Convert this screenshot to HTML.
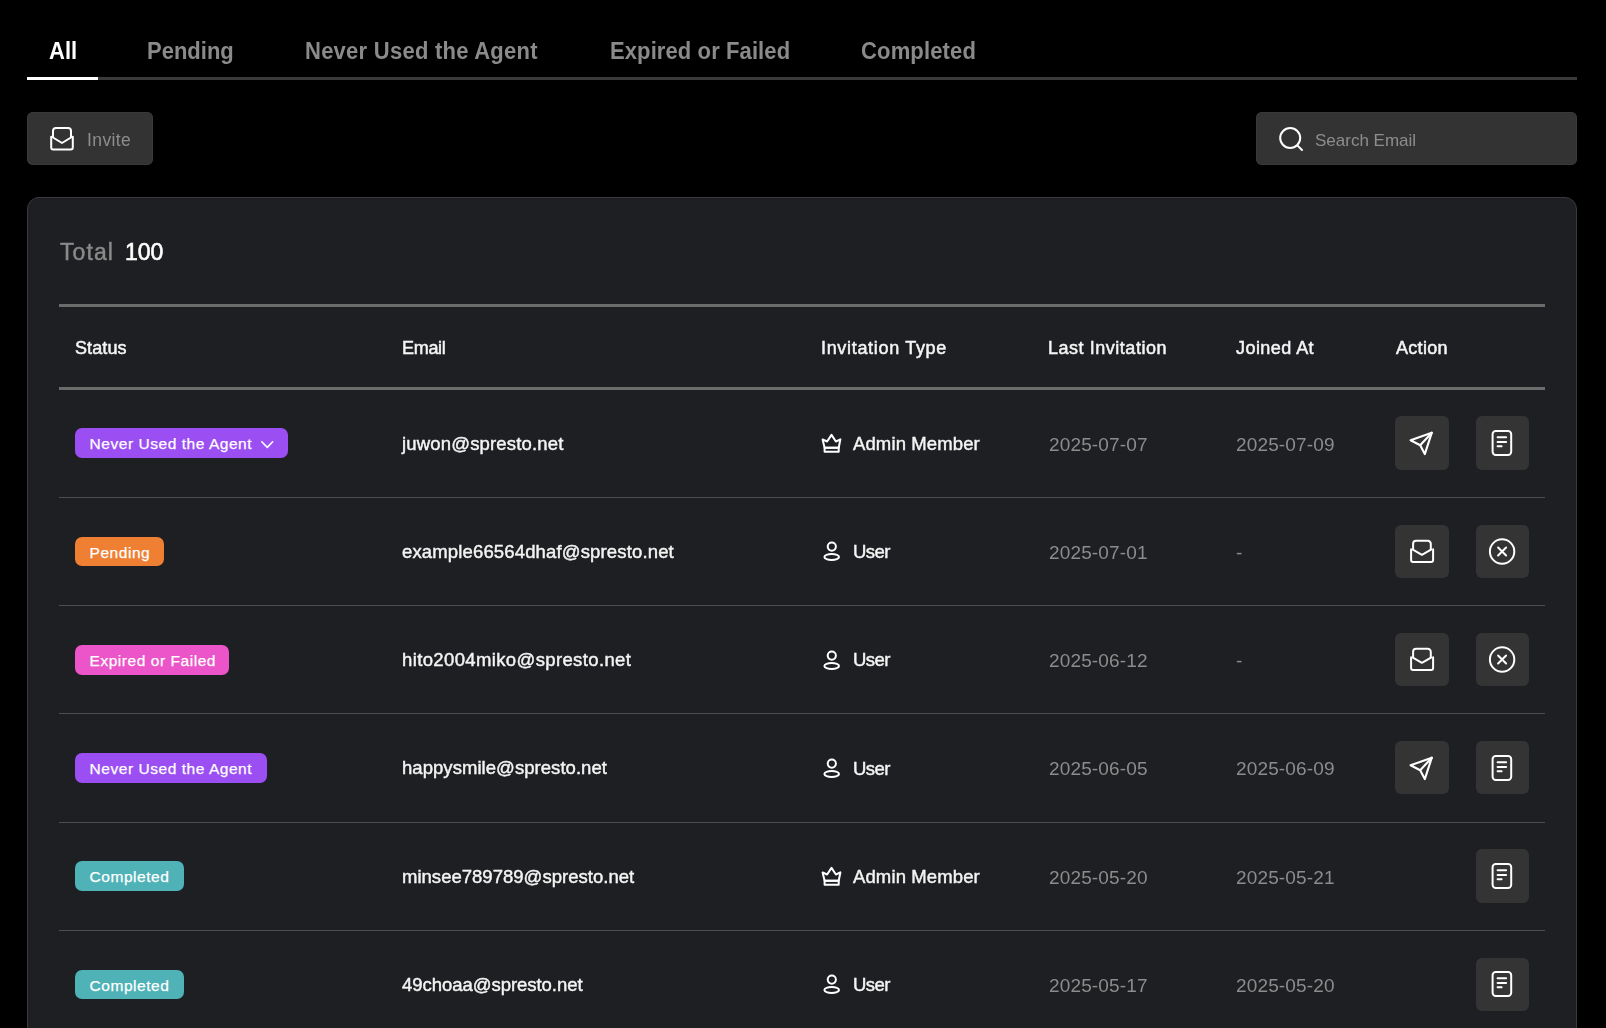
<!DOCTYPE html>
<html><head><meta charset="utf-8">
<style>
html,body{margin:0;padding:0;background:#000;width:1606px;height:1028px;overflow:hidden;font-family:"Liberation Sans",sans-serif;}
.a{position:absolute;}
.t{position:absolute;line-height:1;white-space:nowrap;will-change:transform;}
.tab{font-weight:700;color:#8a8a8a;transform:scaleY(1.07);transform-origin:0 18.7px;}
.tabline{left:27px;top:77px;width:1550px;height:3px;background:#3a3a3a;}
.btn{background:#333333;border-radius:6px;box-shadow:inset 0 0 0 1px #393939;}
.card{left:27px;top:197px;width:1548px;height:900px;background:#1e1f22;border:1px solid #38393c;border-radius:12px;}
.hline{left:59px;width:1486px;height:3px;background:#6b6b6b;}
.rline{left:59px;width:1486px;height:1px;background:#4d4d4f;}
.th{font-weight:400;color:#f5f5f5;-webkit-text-stroke:0.5px #f5f5f5;}
.badge{position:absolute;left:75px;height:29.6px;border-radius:7px;color:#fff;white-space:nowrap;}
.badge span{position:absolute;left:14.5px;line-height:1;font-size:15.5px;letter-spacing:0.55px;-webkit-text-stroke:0.25px #fff;}
.em{color:#f4f4f4;-webkit-text-stroke:0.45px #f4f4f4;}
.ty{color:#f4f4f4;-webkit-text-stroke:0.45px #f4f4f4;}
.dt{font-size:19px;color:#8c8c8c;}
.ab{position:absolute;width:53.5px;height:53.3px;background:#343434;border-radius:6px;}
.ab svg{position:absolute;left:0;top:0;}
svg{overflow:visible;}
</style></head><body>
<div class="t tab" style="left:49px;top:41.10px;font-size:22px;letter-spacing:0px;color:#fff">All</div>
<div class="t tab" style="left:147px;top:41.10px;font-size:22px;letter-spacing:0px;">Pending</div>
<div class="t tab" style="left:305px;top:41.10px;font-size:22px;letter-spacing:0.25px;">Never Used the Agent</div>
<div class="t tab" style="left:610px;top:41.10px;font-size:22px;letter-spacing:0.1px;">Expired or Failed</div>
<div class="t tab" style="left:861px;top:41.10px;font-size:22px;letter-spacing:0.15px;">Completed</div>
<div class="a tabline"></div>
<div class="a" style="left:27px;top:77px;width:71px;height:3px;background:#fff"></div>
<div class="a btn" style="left:27px;top:112px;width:126px;height:53px"></div>
<svg class="a" style="left:50px;top:127px" width="24" height="24" viewBox="0 0 24 24" fill="none" stroke="#fff" stroke-width="2" stroke-linejoin="round" stroke-linecap="round">
<path d="M3 10V4a3 3 0 0 1 3-3h12a3 3 0 0 1 3 3v6"/>
<path d="M1.2 9.8V20.5a2 2 0 0 0 2 2h17.6a2 2 0 0 0 2-2V9.8"/>
<path d="M3 10.5L12 16l9-5.5"/>
</svg>
<div class="t " style="left:87px;top:132.12px;font-size:17.5px;color:#8d8d8d;letter-spacing:0.4px">Invite</div>
<div class="a btn" style="left:1256px;top:112px;width:321px;height:53px"></div>
<svg class="a" style="left:1279px;top:127px" width="24" height="24" viewBox="0 0 24 24" fill="none" stroke="#fff" stroke-width="2" stroke-linecap="round">
<circle cx="11.2" cy="11" r="10"/>
<path d="M18.6 18.6L23 23"/>
</svg>
<div class="t " style="left:1315px;top:131.55px;font-size:17px;color:#8d8d8d">Search Email</div>
<div class="a card"></div>
<div class="t " style="left:60px;top:241.45px;font-size:23px;color:#8a8a8a;letter-spacing:1.1px;-webkit-text-stroke:0.45px #8a8a8a">Total</div>
<div class="t " style="left:125px;top:241.45px;font-size:23px;color:#fff;-webkit-text-stroke:0.6px #fff">100</div>
<div class="a hline" style="top:304px"></div>
<div class="t th" style="left:75px;top:339.10px;font-size:18px;letter-spacing:0.1px">Status</div>
<div class="t th" style="left:402px;top:339.10px;font-size:18px;letter-spacing:-0.3px">Email</div>
<div class="t th" style="left:821px;top:339.10px;font-size:18px;letter-spacing:0.68px">Invitation Type</div>
<div class="t th" style="left:1048px;top:339.10px;font-size:18px;letter-spacing:0.53px">Last Invitation</div>
<div class="t th" style="left:1235.5px;top:339.10px;font-size:18px;letter-spacing:0.44px">Joined At</div>
<div class="t th" style="left:1396px;top:339.10px;font-size:18px;letter-spacing:0.3px">Action</div>
<div class="a hline" style="top:387px"></div>
<div class="badge" style="top:428.45px;width:213.0px;background:#9b4ff2"><span style="top:7.83px">Never Used the Agent</span><svg class="a" style="left:185.5px;top:12.5px" width="12.5" height="7.2" viewBox="0 0 12.5 7.2" fill="none" stroke="#fff" stroke-width="1.6" stroke-linecap="round" stroke-linejoin="round"><path d="M0.8 0.8L6.25 6.4L11.7 0.8"/></svg></div>
<div class="t em" style="left:401.5px;top:434.72px;font-size:18.5px;letter-spacing:0.17px">juwon@spresto.net</div>
<svg class="a" style="left:815px;top:428.00px" width="32" height="32" viewBox="0 0 32 32" fill="none" stroke="#fff" stroke-width="2" stroke-linejoin="round" stroke-linecap="round"><path d="M7.6 11.4L12.1 13.5L16.5 6.9L20.9 13.5L25.4 11.4L23.7 19.8H9.6Z"/><rect x="9.6" y="19.8" width="14.1" height="3.9"/></svg>
<div class="t ty" style="left:853.2px;top:434.82px;font-size:18.5px;letter-spacing:0.12px">Admin Member</div>
<div class="t dt" style="left:1048.5px;top:434.70px;font-size:19px;letter-spacing:0.15px">2025-07-07</div>
<div class="t dt" style="left:1235.5px;top:434.70px;font-size:19px;letter-spacing:0.15px">2025-07-09</div>
<div class="ab" style="left:1395px;top:416.25px"></div>
<svg class="a" style="left:1405px;top:426.85px" width="34" height="34" viewBox="0 0 34 34" fill="none" stroke="#fff" stroke-width="2" stroke-linejoin="round" stroke-linecap="round"><path d="M26.8 5.7L5.6 13.3L15.2 18.2L19.8 27.1Z" stroke-width="2.1"/><path d="M15.2 18.2L26.8 5.7" stroke-width="2.1"/></svg>
<div class="ab" style="left:1475.5px;top:416.25px"></div>
<svg class="a" style="left:1485px;top:426.85px" width="34" height="34" viewBox="0 0 34 34" fill="none" stroke="#fff" stroke-width="2" stroke-linejoin="round" stroke-linecap="round"><rect x="7.6" y="3.9" width="18.6" height="24" rx="3.2"/><path d="M12.6 10.2H21.1M12.6 14.9H21.1M12.6 19.3H16.6"/></svg>
<div class="a rline" style="top:496.88px"></div>
<div class="badge" style="top:536.70px;width:88.5px;background:#ef7f33"><span style="top:7.83px">Pending</span></div>
<div class="t em" style="left:401.5px;top:542.98px;font-size:18.5px;letter-spacing:0.15px">example66564dhaf@spresto.net</div>
<svg class="a" style="left:815px;top:536.25px" width="32" height="32" viewBox="0 0 32 32" fill="none" stroke="#fff" stroke-width="2" stroke-linejoin="round" stroke-linecap="round"><circle cx="16.8" cy="10.6" r="4.1"/><ellipse cx="16.7" cy="21" rx="7.3" ry="3"/></svg>
<div class="t ty" style="left:853.2px;top:543.07px;font-size:18.5px;letter-spacing:-0.55px">User</div>
<div class="t dt" style="left:1048.5px;top:542.95px;font-size:19px;letter-spacing:0.15px">2025-07-01</div>
<div class="t dt" style="left:1235.5px;top:542.95px;font-size:19px;letter-spacing:0.15px">-</div>
<div class="ab" style="left:1395px;top:524.50px"></div>
<svg class="a" style="left:1405px;top:535.10px" width="34" height="34" viewBox="0 0 34 34" fill="none" stroke="#fff" stroke-width="2" stroke-linejoin="round" stroke-linecap="round"><path d="M8.1 14.5V8.8a3 3 0 0 1 3-3h11.7a3 3 0 0 1 3 3v5.7"/><path d="M6.1 14.2V25.1a2 2 0 0 0 2 2h18a2 2 0 0 0 2-2V14.2"/><path d="M7.9 14.6L16.9 19.8L26 14.6"/></svg>
<div class="ab" style="left:1475.5px;top:524.50px"></div>
<svg class="a" style="left:1485px;top:535.10px" width="34" height="34" viewBox="0 0 34 34" fill="none" stroke="#fff" stroke-width="2" stroke-linejoin="round" stroke-linecap="round"><circle cx="17.1" cy="16.5" r="12.2"/><path d="M13.1 12.5L21.1 20.5M21.1 12.5L13.1 20.5"/></svg>
<div class="a rline" style="top:605.12px"></div>
<div class="badge" style="top:644.95px;width:153.8px;background:#eb55c9"><span style="top:7.83px">Expired or Failed</span></div>
<div class="t em" style="left:401.5px;top:651.23px;font-size:18.5px;letter-spacing:0.37px">hito2004miko@spresto.net</div>
<svg class="a" style="left:815px;top:644.50px" width="32" height="32" viewBox="0 0 32 32" fill="none" stroke="#fff" stroke-width="2" stroke-linejoin="round" stroke-linecap="round"><circle cx="16.8" cy="10.6" r="4.1"/><ellipse cx="16.7" cy="21" rx="7.3" ry="3"/></svg>
<div class="t ty" style="left:853.2px;top:651.32px;font-size:18.5px;letter-spacing:-0.55px">User</div>
<div class="t dt" style="left:1048.5px;top:651.20px;font-size:19px;letter-spacing:0.15px">2025-06-12</div>
<div class="t dt" style="left:1235.5px;top:651.20px;font-size:19px;letter-spacing:0.15px">-</div>
<div class="ab" style="left:1395px;top:632.75px"></div>
<svg class="a" style="left:1405px;top:643.35px" width="34" height="34" viewBox="0 0 34 34" fill="none" stroke="#fff" stroke-width="2" stroke-linejoin="round" stroke-linecap="round"><path d="M8.1 14.5V8.8a3 3 0 0 1 3-3h11.7a3 3 0 0 1 3 3v5.7"/><path d="M6.1 14.2V25.1a2 2 0 0 0 2 2h18a2 2 0 0 0 2-2V14.2"/><path d="M7.9 14.6L16.9 19.8L26 14.6"/></svg>
<div class="ab" style="left:1475.5px;top:632.75px"></div>
<svg class="a" style="left:1485px;top:643.35px" width="34" height="34" viewBox="0 0 34 34" fill="none" stroke="#fff" stroke-width="2" stroke-linejoin="round" stroke-linecap="round"><circle cx="17.1" cy="16.5" r="12.2"/><path d="M13.1 12.5L21.1 20.5M21.1 12.5L13.1 20.5"/></svg>
<div class="a rline" style="top:713.38px"></div>
<div class="badge" style="top:753.20px;width:191.5px;background:#9b4ff2"><span style="top:7.83px">Never Used the Agent</span></div>
<div class="t em" style="left:401.5px;top:759.48px;font-size:18.5px;letter-spacing:0.05px">happysmile@spresto.net</div>
<svg class="a" style="left:815px;top:752.75px" width="32" height="32" viewBox="0 0 32 32" fill="none" stroke="#fff" stroke-width="2" stroke-linejoin="round" stroke-linecap="round"><circle cx="16.8" cy="10.6" r="4.1"/><ellipse cx="16.7" cy="21" rx="7.3" ry="3"/></svg>
<div class="t ty" style="left:853.2px;top:759.57px;font-size:18.5px;letter-spacing:-0.55px">User</div>
<div class="t dt" style="left:1048.5px;top:759.45px;font-size:19px;letter-spacing:0.15px">2025-06-05</div>
<div class="t dt" style="left:1235.5px;top:759.45px;font-size:19px;letter-spacing:0.15px">2025-06-09</div>
<div class="ab" style="left:1395px;top:741.00px"></div>
<svg class="a" style="left:1405px;top:751.60px" width="34" height="34" viewBox="0 0 34 34" fill="none" stroke="#fff" stroke-width="2" stroke-linejoin="round" stroke-linecap="round"><path d="M26.8 5.7L5.6 13.3L15.2 18.2L19.8 27.1Z" stroke-width="2.1"/><path d="M15.2 18.2L26.8 5.7" stroke-width="2.1"/></svg>
<div class="ab" style="left:1475.5px;top:741.00px"></div>
<svg class="a" style="left:1485px;top:751.60px" width="34" height="34" viewBox="0 0 34 34" fill="none" stroke="#fff" stroke-width="2" stroke-linejoin="round" stroke-linecap="round"><rect x="7.6" y="3.9" width="18.6" height="24" rx="3.2"/><path d="M12.6 10.2H21.1M12.6 14.9H21.1M12.6 19.3H16.6"/></svg>
<div class="a rline" style="top:821.62px"></div>
<div class="badge" style="top:861.45px;width:109.0px;background:#4fb2b6"><span style="top:7.83px">Completed</span></div>
<div class="t em" style="left:401.5px;top:867.73px;font-size:18.5px;letter-spacing:0.02px">minsee789789@spresto.net</div>
<svg class="a" style="left:815px;top:861.00px" width="32" height="32" viewBox="0 0 32 32" fill="none" stroke="#fff" stroke-width="2" stroke-linejoin="round" stroke-linecap="round"><path d="M7.6 11.4L12.1 13.5L16.5 6.9L20.9 13.5L25.4 11.4L23.7 19.8H9.6Z"/><rect x="9.6" y="19.8" width="14.1" height="3.9"/></svg>
<div class="t ty" style="left:853.2px;top:867.82px;font-size:18.5px;letter-spacing:0.12px">Admin Member</div>
<div class="t dt" style="left:1048.5px;top:867.70px;font-size:19px;letter-spacing:0.15px">2025-05-20</div>
<div class="t dt" style="left:1235.5px;top:867.70px;font-size:19px;letter-spacing:0.15px">2025-05-21</div>
<div class="ab" style="left:1475.5px;top:849.25px"></div>
<svg class="a" style="left:1485px;top:859.85px" width="34" height="34" viewBox="0 0 34 34" fill="none" stroke="#fff" stroke-width="2" stroke-linejoin="round" stroke-linecap="round"><rect x="7.6" y="3.9" width="18.6" height="24" rx="3.2"/><path d="M12.6 10.2H21.1M12.6 14.9H21.1M12.6 19.3H16.6"/></svg>
<div class="a rline" style="top:929.88px"></div>
<div class="badge" style="top:969.70px;width:109.0px;background:#4fb2b6"><span style="top:7.83px">Completed</span></div>
<div class="t em" style="left:401.5px;top:975.98px;font-size:18.5px;letter-spacing:-0.04px">49choaa@spresto.net</div>
<svg class="a" style="left:815px;top:969.25px" width="32" height="32" viewBox="0 0 32 32" fill="none" stroke="#fff" stroke-width="2" stroke-linejoin="round" stroke-linecap="round"><circle cx="16.8" cy="10.6" r="4.1"/><ellipse cx="16.7" cy="21" rx="7.3" ry="3"/></svg>
<div class="t ty" style="left:853.2px;top:976.07px;font-size:18.5px;letter-spacing:-0.55px">User</div>
<div class="t dt" style="left:1048.5px;top:975.95px;font-size:19px;letter-spacing:0.15px">2025-05-17</div>
<div class="t dt" style="left:1235.5px;top:975.95px;font-size:19px;letter-spacing:0.15px">2025-05-20</div>
<div class="ab" style="left:1475.5px;top:957.50px"></div>
<svg class="a" style="left:1485px;top:968.10px" width="34" height="34" viewBox="0 0 34 34" fill="none" stroke="#fff" stroke-width="2" stroke-linejoin="round" stroke-linecap="round"><rect x="7.6" y="3.9" width="18.6" height="24" rx="3.2"/><path d="M12.6 10.2H21.1M12.6 14.9H21.1M12.6 19.3H16.6"/></svg>
</body></html>
